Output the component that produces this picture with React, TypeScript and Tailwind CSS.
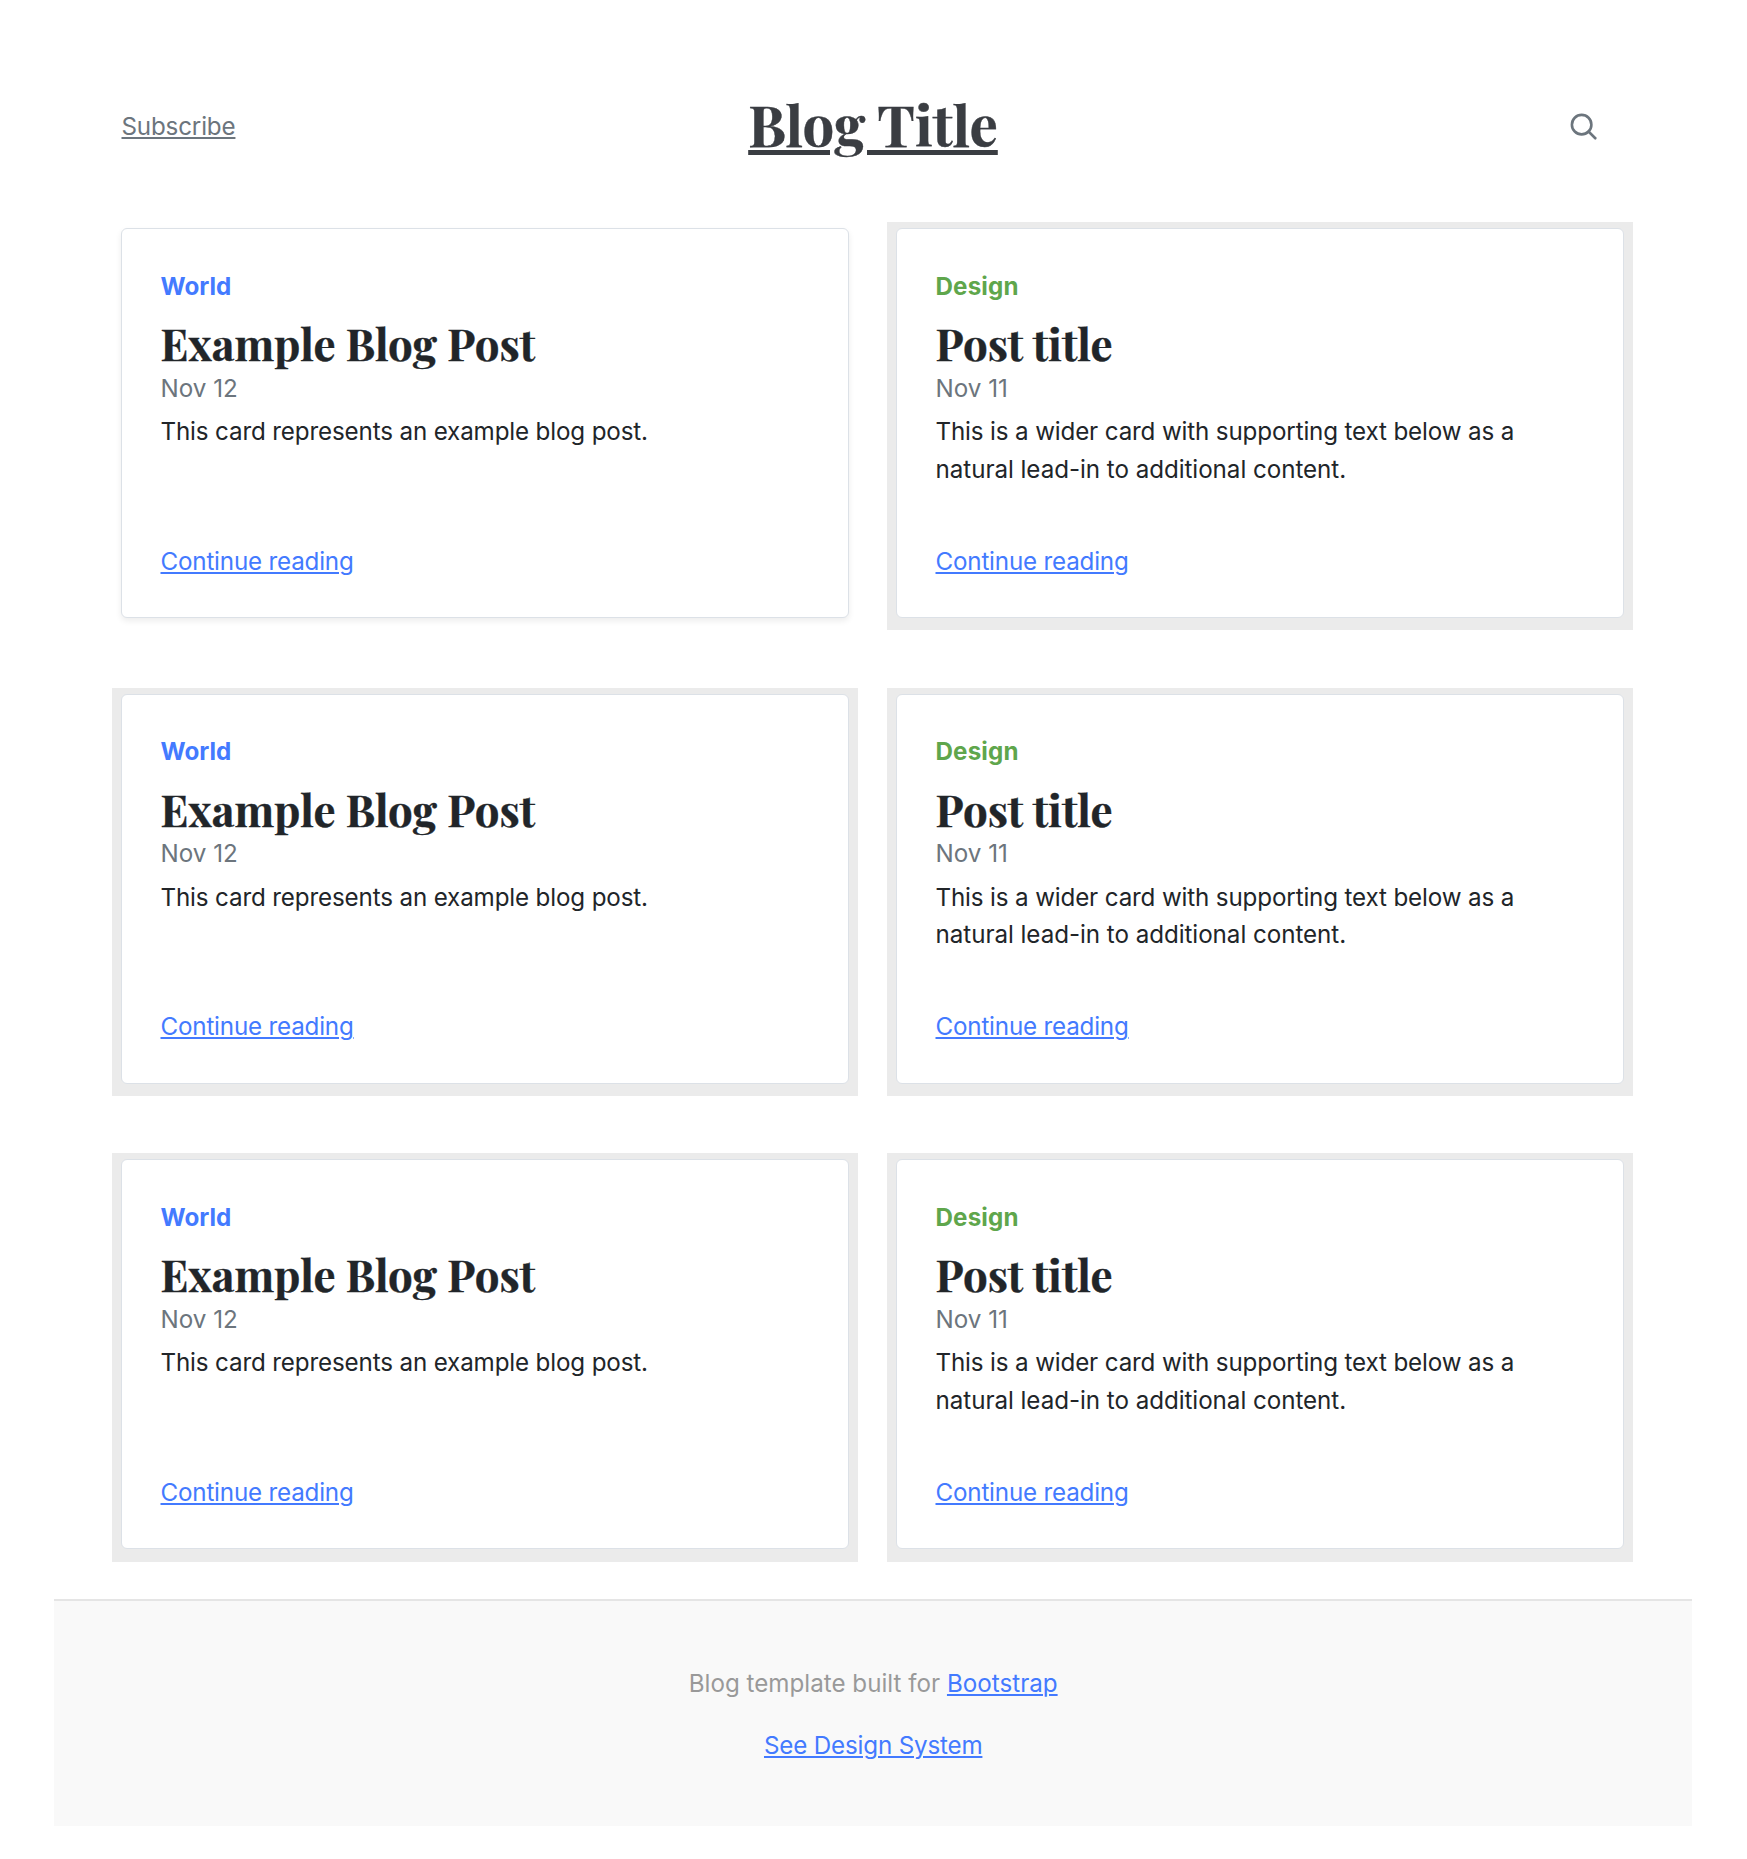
type Post = {
  category: string;
  accent: string;
  title: string;
  date: string;
  body: string[];
};

const world: Post = {
  category: "World",
  accent: "text-[#437aff]",
  title: "Example Blog Post",
  date: "Nov 12",
  body: ["This card represents an example blog post."],
};

const design: Post = {
  category: "Design",
  accent: "text-[#5fa64c] tracking-[0.15px]",
  title: "Post title",
  date: "Nov 11",
  body: [
    "This is a wider card with supporting text below as a",
    "natural lead-in to additional content.",
  ],
};

const posts: Post[] = [world, design, world, design, world, design];

const lineTracking = ["tracking-[-0.15px]", "tracking-[-0.05px]"];

const link =
  "underline decoration-[1.5px] underline-offset-[2px] text-[#437aff]";

function Card({ post, framed }: { post: Post; framed: boolean }) {
  return (
    <div
      className={
        framed
          ? "h-[408.3px] bg-[#ebebeb] px-[9px] pt-[6px] pb-[12.5px]"
          : "h-[408.3px] px-[9px] pt-[6px] pb-[12.5px]"
      }
    >
      <article
        className={
          framed
            ? "flex h-full flex-col items-start rounded-[6px] border border-[#dce1e7] bg-white px-[38.5px] pt-[38.5px] pb-[37px]"
            : "flex h-full flex-col items-start rounded-[6px] border border-[#dce1e7] bg-white px-[38.5px] pt-[38.5px] pb-[37px] shadow-[0_3px_6px_rgba(0,0,0,0.075)]"
        }
      >
        <strong className={`mb-[12px] font-bold ${post.accent}`}>{post.category}</strong>
        <h3 className="font-['Playfair_Display','Liberation_Serif',serif] text-[43.8px] leading-[52px] font-bold [-webkit-text-stroke:0.4px_#212529]">
          {post.title}
        </h3>
        <div className="mt-[0.6px] mb-[6px] text-[#6c757d]">{post.date}</div>
        <p>
          {post.body.map((line, i) => (
            <span key={line} className={`block whitespace-nowrap ${lineTracking[i]}`}>
              {line}
            </span>
          ))}
        </p>
        <a href="#" className={`mt-auto tracking-[-0.19px] ${link}`}>
          Continue reading
        </a>
      </article>
    </div>
  );
}

export default function App() {
  return (
    <div className="min-h-[1859px] w-[1747px] bg-white font-[Inter,sans-serif] text-[24.2px] leading-[37.4px] text-[#212529]">
      <header className="grid h-[172px] grid-cols-3 items-center px-[121.5px] pt-[82px]">
        <a
          href="#"
          className="justify-self-start tracking-[-0.17px] text-[#6c757d] underline decoration-[1.5px] underline-offset-[2px]"
        >
          Subscribe
        </a>
        <a
          href="#"
          className="mr-[1px] self-start justify-self-center font-['Playfair_Display','Liberation_Serif',serif] text-[56.3px] leading-[84px] font-bold text-[#3a3d42] underline decoration-[4.5px] underline-offset-[3px] [-webkit-text-stroke:0.4px_#3a3d42]"
        >
          Blog Title
        </a>
        <a href="#" aria-label="Search" className="mr-[26px] justify-self-end text-[#6c757d]">
          <svg
            className="mb-[1px] size-[31.2px]"
            viewBox="0 0 24 24"
            fill="none"
            stroke="currentColor"
            strokeWidth="2"
            strokeLinecap="round"
            strokeLinejoin="round"
          >
            <circle cx="10.5" cy="10.5" r="7.5" />
            <path d="M21 21l-5.2-5.2" />
          </svg>
        </a>
      </header>

      <main className="mt-[50.2px] ml-[112px] grid w-[1521px] grid-cols-2 gap-x-[29px] gap-y-[57.3px]">
        {posts.map((post, i) => (
          <Card key={i} post={post} framed={i > 0} />
        ))}
      </main>

      <footer className="mr-[55px] ml-[54.4px] mt-[37.6px] flex h-[227px] flex-col items-center gap-[25px] border-t-2 border-[#e5e5e5] bg-[#f9f9f9] pt-[63.8px] text-[#999]">
        <p>
          Blog template built for{" "}
          <a href="#" className={link}>
            Bootstrap
          </a>
        </p>
        <a href="#" className={`tracking-[-0.18px] ${link}`}>
          See Design System
        </a>
      </footer>
    </div>
  );
}
